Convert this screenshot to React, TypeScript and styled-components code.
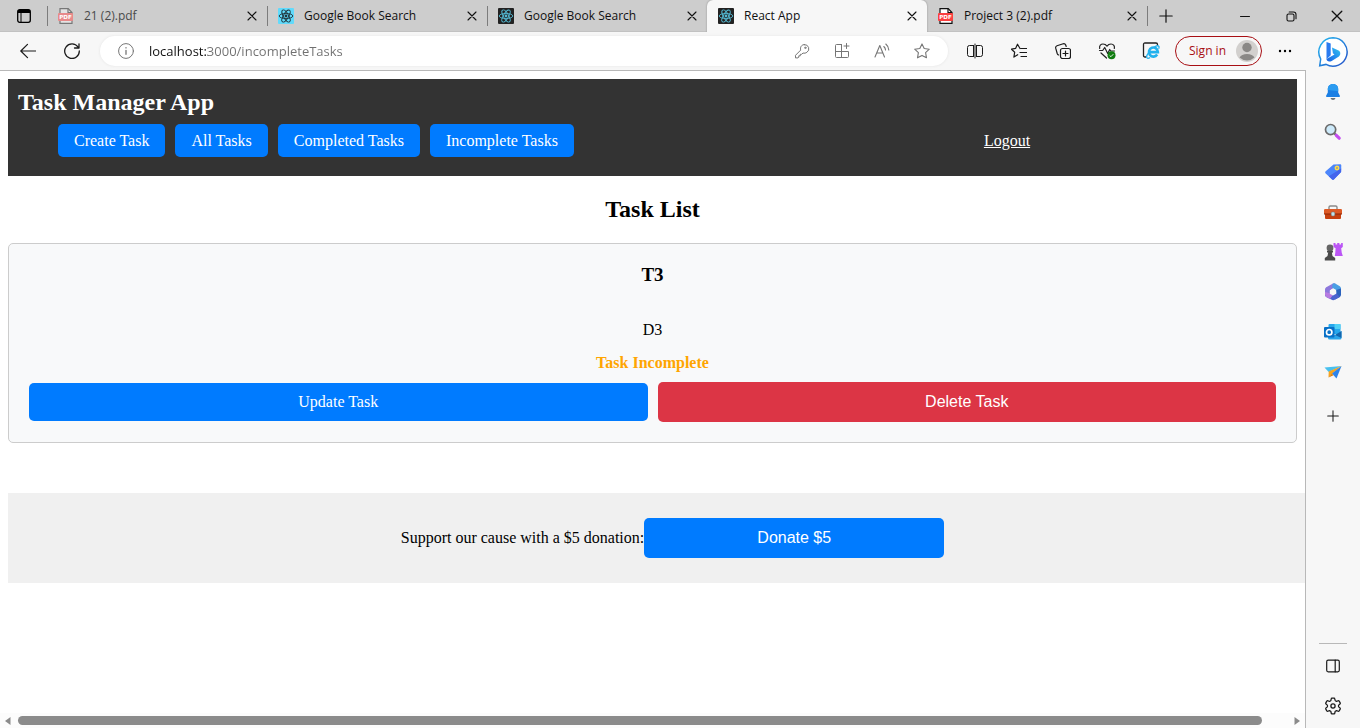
import React from "react";
import styled, { createGlobalStyle, css } from "styled-components";

const ui = '"Open Sans", "Noto Sans", sans-serif';
const serif = '"Liberation Serif", "Times New Roman", serif';
const sans = '"Liberation Sans", Arial, sans-serif';

const GlobalStyle = createGlobalStyle`
  *, *::before, *::after { box-sizing: border-box; }
  body { margin: 0; background: #fff; }
  button { font: inherit; color: inherit; margin: 0; padding: 0; border: 0; background: none; cursor: pointer; }
  svg { display: block; flex: none; }
`;

/* ---------- window frame ---------- */

const Window = styled.div`
  display: flex;
  flex-direction: column;
  min-height: 100vh;
  font-family: ${ui};
  background: #f7f7f7;
`;

const TabStrip = styled.div`
  display: flex;
  height: 32px;
  background: #cdcdcd;
  box-shadow: inset 0 -1px 0 #c2c2c2;
`;

const FrameButton = styled.button<{ $width: number }>`
  display: flex;
  align-items: center;
  justify-content: center;
  flex: none;
  width: ${(p) => p.$width}px;
  color: #111;
`;

const Tab = styled.div<{ $active?: boolean; $divided?: boolean; $faded?: boolean }>`
  position: relative;
  display: flex;
  align-items: center;
  gap: 10px;
  flex: 0 1 220px;
  min-width: 0;
  padding: 0 7px 0 11px;
  font-size: 12px;
  line-height: 16px;
  color: ${(p) => (p.$faded ? "#4a4a4a" : "#111")};
  ${(p) =>
    p.$active &&
    css`
      background: #f7f7f7;
      border-radius: 6px 6px 0 0;
      box-shadow: 0 0 2px #888;
      clip-path: inset(0 -3px 0 -3px);
    `}
  ${(p) =>
    p.$divided &&
    css`
      &::before {
        content: "";
        position: absolute;
        left: 0;
        top: 6px;
        height: 20px;
        width: 1px;
        background: #7c7c7c;
      }
    `}
`;

const TabTitle = styled.span`
  flex: 1;
  min-width: 0;
  overflow: hidden;
  white-space: nowrap;
`;

const TabTail = styled.div`
  position: relative;
  display: flex;
  flex: 1;
  &::before {
    content: "";
    position: absolute;
    left: 0;
    top: 6px;
    height: 20px;
    width: 1px;
    background: #7c7c7c;
  }
`;

const Body = styled.div`
  display: flex;
  flex: 1;
`;

const Column = styled.div`
  display: flex;
  flex-direction: column;
  flex: 1;
  min-width: 0;
`;

/* ---------- toolbar ---------- */

const Toolbar = styled.div`
  display: flex;
  align-items: center;
  height: 38px;
  padding-left: 6px;
`;

const ToolButton = styled.button<{ $width?: number; $muted?: boolean }>`
  display: flex;
  align-items: center;
  justify-content: center;
  flex: none;
  width: ${(p) => p.$width ?? 44}px;
  height: 30px;
  color: ${(p) => (p.$muted ? "#767676" : "#1a1a1a")};
`;

const AddressBar = styled.div`
  display: flex;
  align-items: center;
  flex: 1;
  min-width: 0;
  height: 30px;
  margin: 0 5px 0 6px;
  padding: 0 6px;
  border-radius: 15px;
  background: #fff;
  box-shadow: 0 0 3px #e4e4e4;
`;

const AddressInput = styled.input`
  flex: 1;
  min-width: 0;
  height: 20px;
  margin: 0;
  padding: 0 0 0 3px;
  border: 0;
  outline: 0;
  font-family: ${ui};
  font-size: 13px;
  line-height: 20px;
  color: transparent;
  background: linear-gradient(to right, #111 62px, #707070 62px);
  background-clip: text;
  -webkit-background-clip: text;
`;

const SignIn = styled.button`
  display: flex;
  align-items: center;
  justify-content: space-between;
  flex: none;
  width: 87px;
  height: 30px;
  margin: 0 2px;
  padding: 0 2px 0 13px;
  border: 1px solid #a80f14;
  border-radius: 15px;
  font-size: 12px;
  line-height: 16px;
  white-space: nowrap;
  color: #a80f14;
`;

/* ---------- side rail ---------- */

const Rail = styled.aside`
  display: flex;
  flex-direction: column;
  align-items: center;
  flex: none;
  width: 54px;
`;

const RailButton = styled.button<{ $height?: number }>`
  display: flex;
  align-items: center;
  justify-content: center;
  flex: none;
  width: 40px;
  height: ${(p) => p.$height ?? 40}px;
  color: #1a1a1a;
`;

const RailEnd = styled.div`
  display: flex;
  flex-direction: column;
  align-items: center;
  margin-top: auto;
  padding: 2px 0;
  border-top: 1px solid #b8b8b8;
  width: 28px;
`;

/* ---------- web page ---------- */

const Viewport = styled.div`
  display: flex;
  flex-direction: column;
  flex: 1;
  overflow: hidden;
  border-top: 1px solid #b8b8b8;
  border-right: 1px solid #b8b8b8;
  background: #fff;
`;

const Page = styled.main`
  flex: 1;
  padding: 8px;
  font-family: ${serif};
  font-size: 16px;
  line-height: 18px;
  color: #000;
`;

const Header = styled.header`
  padding: 10px 10px 19px;
  background: #333;
  color: #fff;
`;

const Title = styled.h1`
  margin: 0 0 8px;
  font-size: 24px;
  line-height: 27px;
`;

const Nav = styled.nav`
  display: grid;
  grid-template-columns: 709fr 560fr;
  align-items: center;
`;

const NavList = styled.ul`
  display: flex;
  gap: 10px;
  margin: 0;
  padding: 0 0 0 40px;
  list-style: none;
`;

const NavLink = styled.a`
  display: block;
  padding: 8px 16px;
  border-radius: 5px;
  line-height: 17px;
  white-space: nowrap;
  text-decoration: none;
  color: #fff;
  background: #007bff;
`;

const Logout = styled.a`
  justify-self: center;
  color: #fff;
`;

const Heading = styled.h2`
  margin: 20px 0;
  font-size: 24px;
  line-height: 27px;
  text-align: center;
`;

const Card = styled.article`
  padding: 20px;
  border: 1px solid #ccc;
  border-radius: 5px;
  background: #f8f9fa;
  text-align: center;
`;

const TaskName = styled.h3`
  margin: 0 0 35px;
  font-size: 19px;
  line-height: 22px;
`;

const TaskText = styled.p`
  margin: 0 0 15px;
`;

const TaskStatus = styled.p`
  margin: 0 0 10px;
  font-weight: bold;
  color: #ffa500;
`;

const Actions = styled.div`
  display: grid;
  grid-template-columns: 1fr 1fr;
  align-items: center;
  gap: 10px;
`;

const UpdateLink = styled.a`
  padding: 10px;
  border-radius: 5px;
  text-decoration: none;
  color: #fff;
  background: #007bff;
`;

const ActionButton = styled.button<{ $tone: "danger" | "primary" }>`
  height: 40px;
  border-radius: 5px;
  font-family: ${sans};
  color: #fff;
  background: ${(p) => (p.$tone === "danger" ? "#dc3545" : "#007bff")};
`;

const Donation = styled.footer`
  box-sizing: content-box;
  display: flex;
  align-items: center;
  justify-content: center;
  width: 100%;
  margin-top: 50px;
  padding: 25px 20px;
  background: #f0f0f0;
  ${ActionButton} { width: 300px; }
`;

const ScrollBar = styled.div`
  display: flex;
  align-items: center;
  justify-content: space-between;
  gap: 7px;
  height: 15px;
  padding: 0 4px;
  background: #fcfcfc;
  color: #8b8b8b;
`;

const ScrollTrack = styled.div`
  flex: 1;
`;

const ScrollThumb = styled.div`
  width: 98%;
  height: 9px;
  border-radius: 5px;
  background: #8b8b8b;
`;

/* ---------- icons ---------- */

type IconProps = { size?: number; box?: number; width?: number; children: React.ReactNode };

const Line = ({ size = 16, box = 16, width = 1, children }: IconProps) => (
  <svg
    width={size}
    height={size}
    viewBox={`0 0 ${box} ${box}`}
    fill="none"
    stroke="currentColor"
    strokeWidth={width}
    strokeLinecap="round"
    strokeLinejoin="round"
    aria-hidden="true"
  >
    {children}
  </svg>
);

const ReactIcon = ({ light }: { light?: boolean }) => {
  const ink = light ? "#20343b" : "#54b9d3";
  return (
    <svg width="16" height="16" viewBox="0 0 16 16" aria-hidden="true">
      <rect width="16" height="16" rx="1" fill={light ? "#61dafb" : "#222"} />
      <g fill="none" stroke={ink} strokeWidth=".9">
        <ellipse cx="8" cy="8" rx="6.8" ry="2.6" />
        <ellipse cx="8" cy="8" rx="6.8" ry="2.6" transform="rotate(60 8 8)" />
        <ellipse cx="8" cy="8" rx="6.8" ry="2.6" transform="rotate(120 8 8)" />
      </g>
      <circle cx="8" cy="8" r="1.4" fill={ink} />
    </svg>
  );
};

const PdfIcon = ({ faded }: { faded?: boolean }) => (
  <svg width="16" height="16" viewBox="0 0 16 16" aria-hidden="true">
    <path d="M2 .7h8.2L14 4.5v10.8H2z" fill={faded ? "#e4e4e4" : "#fff"} stroke={faded ? "#777" : "#111"} strokeWidth="1.2" />
    <path d="M10 .7v4h4" fill="none" stroke={faded ? "#777" : "#111"} strokeWidth="1.2" />
    <rect y="5" width="15" height="8" rx="1" fill={faded ? "#e88a8a" : "#fb4040"} />
    <text x="7.5" y="11.3" textAnchor="middle" fontFamily="DejaVu Sans" fontWeight="bold" fontSize="5.6" fill="#fff">
      PDF
    </text>
  </svg>
);

const CloseIcon = ({ size = 10 }: { size?: number }) => (
  <Line size={size} box={10} width={1.1}>
    <path d="M1 1l8 8M9 1l-8 8" />
  </Line>
);

const PlusIcon = ({ size = 14 }: { size?: number }) => (
  <Line size={size} box={14} width={1.2}>
    <path d="M7 .8v12.4M.8 7h12.4" />
  </Line>
);

const BingIcon = () => (
  <svg width="32" height="32" viewBox="0 0 32 32" aria-hidden="true">
    <defs>
      <linearGradient id="bingRing" x1="0" y1="0" x2="1" y2="1">
        <stop offset="0" stopColor="#23b8f0" />
        <stop offset="1" stopColor="#2450c8" />
      </linearGradient>
      <linearGradient id="bingMark" x1="0" y1="1" x2="1" y2="0">
        <stop offset="0" stopColor="#1b5fe0" />
        <stop offset=".5" stopColor="#2490ee" />
        <stop offset="1" stopColor="#35c8ee" />
      </linearGradient>
    </defs>
    <path d="M16 1.8a14.2 14.2 0 1 1-7 26.6l-6.300 1.300 1-6.700A14.200 14.200 0 0 1 16 1.800z" fill="#fff" stroke="url(#bingRing)" strokeWidth="1.5" />
    <path d="M9.500 6l4.200 1.500v11.800l-4.200 4z" fill="#2a7bf0" />
    <path d="M15 11.500l6.600 3c2.200 1.100 2.300 4.400.3 5.900l-7.200 4.500c-2.500 1.400-5.200.4-5.200-1.800l8-4.600-1.600-1.200z" fill="url(#bingMark)" />
  </svg>
);

const BellIcon = () => (
  <svg width="16" height="18" viewBox="0 0 16 18" aria-hidden="true">
    <path d="M8 1c3.400 0 5.200 2.300 5.200 5.200v3.400l1.700 3.200c.2.600 0 1.200-.6 1.200H1.700c-.6 0-.8-.6-.6-1.200l1.700-3.200V6.200C2.800 3.300 4.600 1 8 1z" fill="#1b7fe4" />
    <path d="M8 1c3.400 0 5.200 2.300 5.200 5.200v2L2.800 7V6.200C2.800 3.300 4.600 1 8 1z" fill="#2b9bf0" />
    <path d="M5.500 15h5c-.4 1.300-1.200 2-2.500 2s-2.100-.7-2.500-2z" fill="#69737b" />
  </svg>
);

const SearchIcon = () => (
  <svg width="18" height="18" viewBox="0 0 18 18" aria-hidden="true">
    <path d="M10.500 10.500l2 2" stroke="#666" strokeWidth="2" />
    <path d="M12.300 12.300l2.900 2.900" stroke="#c44df0" strokeWidth="3.200" strokeLinecap="round" />
    <circle cx="6.600" cy="6.600" r="5.100" fill="#cdeafa" stroke="#6b6b6b" strokeWidth="1.700" />
  </svg>
);

const TagIcon = () => (
  <svg width="18" height="18" viewBox="0 0 18 18" aria-hidden="true">
    <path d="M9.500 1.500l6.500-.2c.8 0 1.300.5 1.300 1.300l-.2 6.300-7 7.300c-.7.700-1.500.7-2.200 0L1.700 10.500c-.7-.7-.7-1.500 0-2.200z" fill="#4c86fb" />
    <path d="M17.200 5.500l-.1 3.400-7 7.300c-.7.700-1.500.7-2.200 0l-3.100-3z" fill="#4465ec" />
    <circle cx="13" cy="5" r="1.700" fill="#8f9a90" stroke="#ffdb4c" strokeWidth="1.500" />
  </svg>
);

const ToolboxIcon = () => (
  <svg width="18" height="16" viewBox="0 0 18 16" aria-hidden="true">
    <path d="M5 5V3.300q0-1.300 1.300-1.300h5.400q1.300 0 1.300 1.300V5" fill="none" stroke="#8a8a8a" strokeWidth="1.400" />
    <path d="M1.200 5h15.600q1.200 0 1.200 1v4H0V6q0-1 1.200-1z" fill="#dd5a26" />
    <path d="M1 10h16v4q0 1-1 1H2q-1 0-1-1z" fill="#c6400f" />
    <path d="M0 10h18" stroke="#8d2706" />
    <rect x="7.200" y="8" width="3.600" height="4" rx="1.300" fill="#bfe2ea" stroke="#777" strokeWidth=".6" />
  </svg>
);

const GamesIcon = () => (
  <svg width="20" height="18" viewBox="0 0 20 18" aria-hidden="true">
    <path d="M10.500 0h2v1.600h1.700V0h2.200v1.600h1.700V0h1.700v4l-1.600 1.200.5 4.300 1.100 3.500h-8l.5-3.500.3-4.300L10.500 4z" fill="#bb55f5" />
    <circle cx="7" cy="5" r="3.400" fill="#656565" />
    <path d="M4 7.800h6v1.600H8.900l.6 3.600 2.700 1.900v2.600H1.800v-2.600L4.500 13l.7-3.600H4z" fill="#4a4a4a" />
  </svg>
);

const OfficeIcon = () => (
  <svg width="18" height="18" viewBox="0 0 18 18" aria-hidden="true">
    <path d="M9 .5L2.200 4.300Q1 5 1 6.400v6.800l5-2.900V7.200L11.800 3.800V.9Q10.400-.2 9 .5z" fill="#8d78dc" />
    <path d="M8.600 .7Q10-.2 11.600.7L15.800 3.200Q17 4 17 5.500v6.200l-4.800-2.600V7L8 4.600z" fill="#4a9fe4" />
    <path d="M17 5.500v6.200q0 1.500-1.200 2.200l-4.600 2.700-.5-5 1.500-1V7z" fill="#2b62bd" />
    <path d="M1 11.500l5-1.800 3 2 3.200-1.600 3.600 3.800-4.600 2.700q-2 1.200-4 0L2.200 13.900Q1 13.100 1 11.500z" fill="#4b63cf" />
    <path d="M1 11.500V9l5 1.300 3 1.700-3 4L2.200 13.900Q1 13.100 1 11.500z" fill="#b77be0" />
    <path d="M9 5.600l3.200 1.800v3.400L9 12.600l-3.200-1.800V7.400z" fill="#f7f7f7" />
  </svg>
);

const OutlookIcon = () => (
  <svg width="18" height="18" viewBox="0 0 18 18" aria-hidden="true">
    <rect x="4.500" y="1" width="12" height="10" rx="1" fill="#27a7ec" />
    <rect x="10.500" y="1" width="6" height="5" fill="#50d1f6" />
    <path d="M4 9l7 3 6.500-4v7q0 1.500-1.500 1.500H5.500Q4 16.500 4 15z" fill="#2ba5ea" />
    <path d="M11 12l6.500-4v7z" fill="#1266ae" />
    <rect y="4" width="10.500" height="10.500" rx="1" fill="#0870c7" />
    <circle cx="5.200" cy="9.200" r="2.700" fill="none" stroke="#fff" strokeWidth="1.700" />
  </svg>
);

const DropIcon = () => (
  <svg width="18" height="16" viewBox="0 0 18 16" aria-hidden="true">
    <path d="M.5 3.500L17.500 2 4.700 8z" fill="#48c0ee" />
    <path d="M4.700 7.500L17.500 2 8.500 9.500 4.500 13.500z" fill="#f7a520" />
    <path d="M8 9.500L17.500 2 12.500 14.500z" fill="#2c83ec" />
    <path d="M4.500 13.500L8 9.500l1.500 1.800z" fill="#d97c0c" />
  </svg>
);

const GearIcon = () => (
  <Line size={18} box={24} width={1.7}>
    <circle cx="12" cy="12" r="2.800" />
    <path d="M10.600 1.500h2.800q.9 0 1 1l.3 1.700q.3.900 1.200 1.200l.9.300 2-.7q.9-.3 1.400.5l1.400 2.400q.4.800-.3 1.400l-1.400 1.200q-.6.600-.6 1.500t.6 1.500l1.400 1.200q.7.600.3 1.400l-1.400 2.400q-.5.800-1.400.5l-2-.7q-.7-.1-1.300.3-.7.400-.8 1.200l-.3 1.700q-.1 1-1 1h-2.800q-.9 0-1-1l-.3-1.700q-.1-.8-.8-1.200-.6-.4-1.300-.3l-2 .7q-.9.300-1.400-.5l-1.400-2.400q-.4-.8.3-1.400l1.400-1.200q.6-.6.6-1.500t-.6-1.500L2.700 9.300q-.7-.6-.3-1.400l1.400-2.400q.5-.8 1.400-.5l2 .7q.7.100 1.300-.3.700-.4.800-1.200l.3-1.700q.1-1 1-1z" />
  </Line>
);

/* ---------- data ---------- */

const tabs = [
  { title: "21 (2).pdf", icon: <PdfIcon faded />, divided: true, faded: true },
  { title: "Google Book Search", icon: <ReactIcon light />, divided: true },
  { title: "Google Book Search", icon: <ReactIcon />, divided: true },
  { title: "React App", icon: <ReactIcon />, active: true },
  { title: "Project 3 (2).pdf", icon: <PdfIcon /> },
];

const railItems = [
  { label: "Notifications", icon: <BellIcon /> },
  { label: "Search", icon: <SearchIcon /> },
  { label: "Shopping", icon: <TagIcon /> },
  { label: "Tools", icon: <ToolboxIcon /> },
  { label: "Games", icon: <GamesIcon /> },
  { label: "Microsoft 365", icon: <OfficeIcon /> },
  { label: "Outlook", icon: <OutlookIcon /> },
  { label: "Drop", icon: <DropIcon /> },
];

const addressTools = [
  {
    label: "Passwords",
    icon: (
      <Line>
        <path d="M10.200 1.600a4.200 4.200 0 0 1 2.700 7.700c-1.200.9-2.600 1.100-3.900.7L7.700 11.300H6.300v1.500H4.800v1.400l-.8.700H1.500v-2.600l5.200-5.200c-.8-2.700.7-5.500 3.500-5.500z" />
        <circle cx="11.300" cy="4.800" r=".7" />
      </Line>
    ),
  },
  {
    label: "Apps",
    icon: (
      <Line>
        <path d="M7.500 1.500H2.500q-1 0-1 1v11q0 1 1 1h11q1 0 1-1v-5h-13M7.500 1.500v13M12.500.5v5M10 3h5" />
      </Line>
    ),
  },
  {
    label: "Read aloud",
    icon: (
      <Line width={1.1}>
        <path d="M1 14L5.800 2.500 10.500 14M2.800 10h6M9.800 3.500q1.700 1.500 1.700 3.500M11.800 1q3 2.500 3 6" />
      </Line>
    ),
  },
  {
    label: "Add to favourites",
    icon: (
      <Line width={1.1}>
        <path d="M8 .9l2.200 4.600 5.100.7-3.700 3.500.9 5.100L8 12.400l-4.500 2.400.9-5.100L.7 6.200l5.100-.7z" />
      </Line>
    ),
  },
];

const browserTools = [
  {
    label: "Split screen",
    icon: (
      <Line>
        <path d="M6.500 2.500h-4q-2 0-2 2v7q0 2 2 2h4M9.500 2.500h4q2 0 2 2v7q0 2-2 2h-4M6.500 2.500v11M9.500 2.500v11M8 1v14" />
      </Line>
    ),
  },
  {
    label: "Favourites",
    icon: (
      <Line width={1.2}>
        <path d="M9 5.500L6.500 1.200 4.700 5.300.5 6.200l3.200 3-.8 4.900 3.800-2.400M10 5.500h5.500M9 9.500h6.500M10 13.500h5.500" />
      </Line>
    ),
  },
  {
    label: "Collections",
    icon: (
      <Line width={1.2}>
        <rect x="5.500" y="5.500" width="10" height="10" rx="2" />
        <path d="M10.500 8v5M8 10.500h5M3.600 12Q2.600 11.600 2.200 10.500L.7 5.200Q.3 3.400 2 2.800L8.200.8Q10 .4 10.700 2l.5 1.500" />
      </Line>
    ),
  },
  {
    label: "Browser essentials",
    icon: (
      <svg width="18" height="18" viewBox="0 0 18 18" aria-hidden="true">
        <path d="M1.700 6.500C1 3.500 3 2 5 2q2.500 0 4 2.200Q10.500 2 13 2c2.500 0 4 2 3.300 4.500M1.500 8.500h3.200l2-3 3 6 2-4 1 1.500h3.800M3 11l5.500 5" fill="none" stroke="#222" strokeWidth="1.2" strokeLinecap="round" strokeLinejoin="round" />
        <circle cx="13.500" cy="13.300" r="4" fill="#107c10" />
        <path d="M11.700 13.500l1.200 1.200 2.400-2.500" fill="none" stroke="#fff" strokeWidth=".9" />
      </svg>
    ),
  },
  {
    label: "Internet Explorer mode",
    icon: (
      <svg width="18" height="18" viewBox="0 0 18 18" aria-hidden="true">
        <path d="M4 15H3q-1.500 0-1.500-1.500v-11Q1.500 1 3 1h11q1.500 0 1.500 1.500V4" fill="none" stroke="#222" strokeWidth="1.3" />
        <path d="M15.200 12.500a4.500 4.500 0 1 1 .7-2.400H7.500" fill="none" stroke="#22b2ee" strokeWidth="2.600" />
        <path d="M6 11.500c-2.500 3.500-1.500 6 2 4.200M12 5.200c3.500-2.400 6-1.800 4.700 1.500" fill="none" stroke="#22b2ee" strokeWidth="1.3" />
      </svg>
    ),
  },
];

export default function App() {
  return (
    <>
      <GlobalStyle />
      <Window>
        <TabStrip>
          <FrameButton $width={47} aria-label="Tab actions">
            <svg width="14" height="14" viewBox="0 0 14 14" aria-hidden="true">
              <rect x=".7" y=".7" width="12.600" height="12.600" rx="2" fill="none" stroke="#000" strokeWidth="1.3" />
              <path d="M1 1h12v3H1z" fill="#000" />
              <path d="M4 3v10" stroke="#000" />
            </svg>
          </FrameButton>
          {tabs.map((tab, i) => (
            <Tab key={i} $active={tab.active} $divided={tab.divided} $faded={tab.faded}>
              {tab.icon}
              <TabTitle>{tab.title}</TabTitle>
              <FrameButton $width={16} aria-label="Close tab">
                <CloseIcon />
              </FrameButton>
            </Tab>
          ))}
          <TabTail>
            <FrameButton $width={37} aria-label="New tab">
              <PlusIcon />
            </FrameButton>
          </TabTail>
          <FrameButton $width={46} aria-label="Minimise">
            <Line size={10} box={10}>
              <path d="M.5 5.500h9" />
            </Line>
          </FrameButton>
          <FrameButton $width={46} aria-label="Restore">
            <Line size={11} box={11} width={1.1}>
              <rect x="1" y="3" width="7" height="7" rx="1.500" />
              <path d="M3.200 1h4.300Q10 1 10 3.500v4.300" />
            </Line>
          </FrameButton>
          <FrameButton $width={46} aria-label="Close window">
            <CloseIcon size={12} />
          </FrameButton>
        </TabStrip>

        <Body>
          <Column>
            <Toolbar>
              <ToolButton aria-label="Back">
                <Line width={1.2}>
                  <path d="M15.500 8H.8M7.500 1.300L.8 8l6.700 6.700" />
                </Line>
              </ToolButton>
              <ToolButton aria-label="Refresh">
                <Line width={1.3}>
                  <path d="M15.300 8A7.300 7.300 0 1 1 14 4M15 .8v4.200h-4.500" />
                </Line>
              </ToolButton>
              <AddressBar>
                <ToolButton $width={40} $muted aria-label="Site information">
                  <Line>
                    <circle cx="8" cy="8" r="7.400" />
                    <path d="M8 7.300v4M8 4.600v.3" strokeWidth="1.3" />
                  </Line>
                </ToolButton>
                <AddressInput aria-label="Address" defaultValue="localhost:3000/incompleteTasks" spellCheck={false} />
                {addressTools.map((tool) => (
                  <ToolButton key={tool.label} $width={40} $muted aria-label={tool.label}>
                    {tool.icon}
                  </ToolButton>
                ))}
              </AddressBar>
              {browserTools.map((tool) => (
                <ToolButton key={tool.label} aria-label={tool.label}>
                  {tool.icon}
                </ToolButton>
              ))}
              <SignIn>
                Sign in
                <svg width="24" height="24" viewBox="0 0 24 24" aria-hidden="true">
                  <circle cx="12" cy="12" r="11" fill="#d2d0ce" />
                  <circle cx="12" cy="8.500" r="4.700" fill="#8a8886" />
                  <path d="M4.500 18.500q2-3.500 7.500-3.500t7.500 3.500a11 11 0 0 1-15 0z" fill="#8a8886" />
                </svg>
              </SignIn>
              <ToolButton $width={42} aria-label="More">
                <svg width="16" height="4" viewBox="0 0 16 4" aria-hidden="true">
                  <circle cx="3" cy="2" r="1.200" />
                  <circle cx="8" cy="2" r="1.200" />
                  <circle cx="13" cy="2" r="1.200" />
                </svg>
              </ToolButton>
            </Toolbar>

            <Viewport>
              <Page>
                <Header>
                  <Title>Task Manager App</Title>
                  <Nav>
                    <NavList>
                      {["Create Task", "All Tasks", "Completed Tasks", "Incomplete Tasks"].map((name) => (
                        <li key={name}>
                          <NavLink href="#">{name}</NavLink>
                        </li>
                      ))}
                    </NavList>
                    <Logout href="#">Logout</Logout>
                  </Nav>
                </Header>
                <Heading>Task List</Heading>
                <Card>
                  <TaskName>T3</TaskName>
                  <TaskText>D3</TaskText>
                  <TaskStatus>Task Incomplete</TaskStatus>
                  <Actions>
                    <UpdateLink href="#">Update Task</UpdateLink>
                    <ActionButton $tone="danger">Delete Task</ActionButton>
                  </Actions>
                </Card>
                <Donation>
                  <span>Support our cause with a $5 donation:</span>
                  <ActionButton $tone="primary">Donate $5</ActionButton>
                </Donation>
              </Page>
              <ScrollBar>
                <svg width="7" height="8" viewBox="0 0 7 8" aria-hidden="true">
                  <path d="M6.500 0v8L1 4z" fill="currentColor" />
                </svg>
                <ScrollTrack>
                  <ScrollThumb />
                </ScrollTrack>
                <svg width="7" height="8" viewBox="0 0 7 8" aria-hidden="true">
                  <path d="M.5 0v8L6 4z" fill="currentColor" />
                </svg>
              </ScrollBar>
            </Viewport>
          </Column>

          <Rail>
            <RailButton aria-label="Bing">
              <BingIcon />
            </RailButton>
            {railItems.map((item) => (
              <RailButton key={item.label} aria-label={item.label}>
                {item.icon}
              </RailButton>
            ))}
            <RailButton $height={48} aria-label="Customise">
              <PlusIcon size={12} />
            </RailButton>
            <RailEnd>
              <RailButton aria-label="Hide sidebar">
                <Line size={14} box={14} width={1.2}>
                  <rect x=".7" y="1.200" width="12.600" height="11.600" rx="1.500" />
                  <path d="M9.200 1.200v11.600" />
                </Line>
              </RailButton>
              <RailButton aria-label="Settings">
                <GearIcon />
              </RailButton>
            </RailEnd>
          </Rail>
        </Body>
      </Window>
    </>
  );
}
